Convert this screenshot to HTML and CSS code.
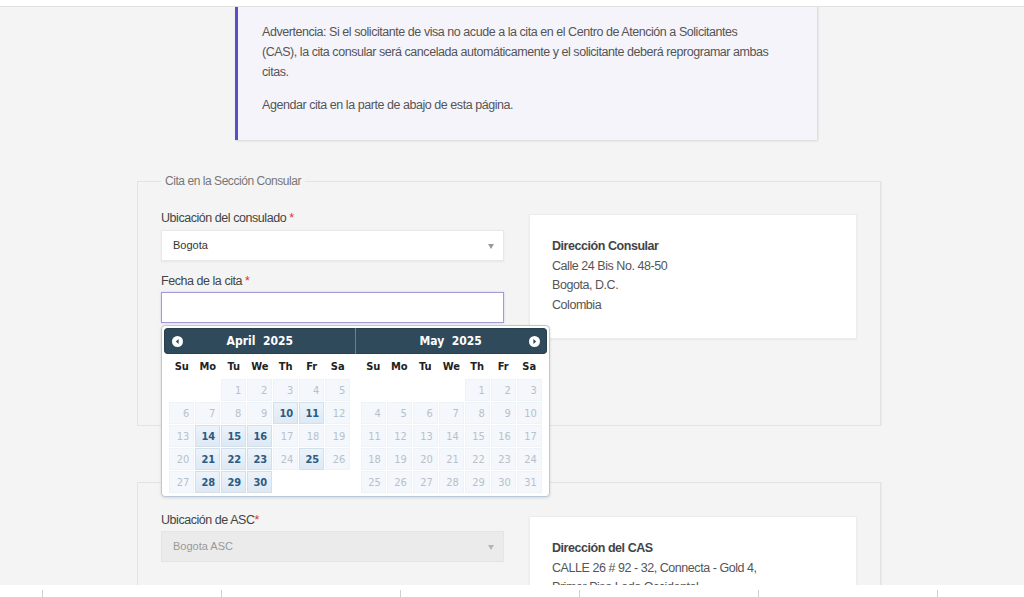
FILE: index.html
```html
<!DOCTYPE html>
<html lang="es">
<head>
  <meta charset="UTF-8">
  <title>Programar cita</title>
  <link rel="stylesheet" href="styles.css">
</head>
<body>
  <header class="topbar"></header>

  <main class="page">
    <div class="warning">
      <p>Advertencia: Si el solicitante de visa no acude a la cita en el Centro de Atención a Solicitantes (CAS), la cita consular será cancelada automáticamente y el solicitante deberá reprogramar ambas citas.</p>
      <p>Agendar cita en la parte de abajo de esta página.</p>
    </div>

    <!-- Consular section -->
    <fieldset class="section">
      <legend>Cita en la Sección Consular</legend>
      <div class="section-grid">
        <div class="fields">
          <label>Ubicación del consulado <span class="req">*</span></label>
          <div class="select">Bogota</div>
          <label class="next-label">Fecha de la cita <span class="req">*</span></label>
          <div class="date-wrap">
            <div class="date-input"></div>

            <div class="datepicker">
              <div class="dp-group">
                <div class="dp-header dp-first">
                  <span class="dp-nav dp-prev">
                    <svg width="11" height="11" viewBox="0 0 11 11"><circle cx="5.5" cy="5.5" r="5.5" fill="#fff"/><path d="M6.6 3.1 L3.8 5.5 L6.6 7.9 Z" fill="#2f4a5b"/></svg>
                  </span>
                  <span class="dp-title">April&nbsp; 2025</span>
                </div>
                <table class="dp-cal">
                  <thead>
                    <tr><th>Su</th><th>Mo</th><th>Tu</th><th>We</th><th>Th</th><th>Fr</th><th>Sa</th></tr>
                  </thead>
                  <tbody>
                    <tr><td></td><td></td><td class="day off">1</td><td class="day off">2</td><td class="day off">3</td><td class="day off">4</td><td class="day off">5</td></tr>
                    <tr><td class="day off">6</td><td class="day off">7</td><td class="day off">8</td><td class="day off">9</td><td class="day">10</td><td class="day">11</td><td class="day off">12</td></tr>
                    <tr><td class="day off">13</td><td class="day">14</td><td class="day">15</td><td class="day">16</td><td class="day off">17</td><td class="day off">18</td><td class="day off">19</td></tr>
                    <tr><td class="day off">20</td><td class="day">21</td><td class="day">22</td><td class="day">23</td><td class="day off">24</td><td class="day">25</td><td class="day off">26</td></tr>
                    <tr><td class="day off">27</td><td class="day">28</td><td class="day">29</td><td class="day">30</td><td></td><td></td><td></td></tr>
                  </tbody>
                </table>
              </div>
              <div class="dp-group">
                <div class="dp-header dp-last">
                  <span class="dp-title">May&nbsp; 2025</span>
                  <span class="dp-nav dp-next">
                    <svg width="11" height="11" viewBox="0 0 11 11"><circle cx="5.5" cy="5.5" r="5.5" fill="#fff"/><path d="M4.4 3.1 L7.2 5.5 L4.4 7.9 Z" fill="#2f4a5b"/></svg>
                  </span>
                </div>
                <table class="dp-cal">
                  <thead>
                    <tr><th>Su</th><th>Mo</th><th>Tu</th><th>We</th><th>Th</th><th>Fr</th><th>Sa</th></tr>
                  </thead>
                  <tbody>
                    <tr><td></td><td></td><td></td><td></td><td class="day off">1</td><td class="day off">2</td><td class="day off">3</td></tr>
                    <tr><td class="day off">4</td><td class="day off">5</td><td class="day off">6</td><td class="day off">7</td><td class="day off">8</td><td class="day off">9</td><td class="day off">10</td></tr>
                    <tr><td class="day off">11</td><td class="day off">12</td><td class="day off">13</td><td class="day off">14</td><td class="day off">15</td><td class="day off">16</td><td class="day off">17</td></tr>
                    <tr><td class="day off">18</td><td class="day off">19</td><td class="day off">20</td><td class="day off">21</td><td class="day off">22</td><td class="day off">23</td><td class="day off">24</td></tr>
                    <tr><td class="day off">25</td><td class="day off">26</td><td class="day off">27</td><td class="day off">28</td><td class="day off">29</td><td class="day off">30</td><td class="day off">31</td></tr>
                  </tbody>
                </table>
              </div>
            </div>
          </div>
        </div>

        <div class="address-card">
          <div class="address-title">Dirección Consular</div>
          <div>Calle 24 Bis No. 48-50</div>
          <div>Bogota, D.C.</div>
          <div>Colombia</div>
        </div>
      </div>
    </fieldset>

    <!-- CAS section -->
    <fieldset class="section no-legend">
      <div class="section-grid">
        <div class="fields">
          <label>Ubicación de ASC<span class="req">*</span></label>
          <div class="select disabled">Bogota ASC</div>
        </div>
        <div class="address-card">
          <div class="address-title">Dirección del CAS</div>
          <div>CALLE 26 # 92 - 32, Connecta - Gold 4,</div>
          <div>Primer Piso Lado Occidental</div>
          <div>Bogota, D.C.</div>
          <div>Colombia</div>
        </div>
      </div>
    </fieldset>
  </main>

  <footer class="bottombar">
    <span></span><span></span><span></span><span></span><span></span><span></span>
  </footer>
</body>
</html>
```

FILE: styles.css
```css
body {margin:0; background:#f4f4f4; font-family:"Liberation Sans", Arial, sans-serif; font-size:12.5px; letter-spacing:-0.45px; color:#444;}
.topbar {position:fixed; top:0; left:0; right:0; height:6px; background:#fff; border-bottom:1px solid #e2e2e2; z-index:10;}
.bottombar {position:fixed; bottom:0; left:0; right:0; height:12px; background:#fff; display:flex; padding-left:42px; overflow:hidden; z-index:10;}
.bottombar span {flex:0 0 178px; border-left:1px solid #cfcfcf; margin-top:5px;}

.page {width:744px; margin-left:137px; padding-bottom:60px;}

/* Warning box */
.warning {margin-left:98px; width:582px; box-sizing:border-box; background:#f5f4fb; border-left:3px solid #5b4fc9; padding:22px 45px 25px 24px; line-height:20px; color:#555; box-shadow:1px 1px 2px rgba(0,0,0,.12);}
.warning p {margin:0;}
.warning p + p {margin-top:13px;}

/* Sections */
.section {margin:33px 0 0; border:1px solid #e3e3e3; padding:21px 23px 86px; min-width:0; box-shadow:1px 0 0 #ebebeb;}
.section legend {padding:0 4px; font-size:12px; line-height:16px; color:#777;}
.section.no-legend {margin-top:56px; padding-top:29px;}
.section-grid {display:grid; grid-template-columns:343px 328px; column-gap:25px; align-items:start;}

label {display:block; line-height:16px; margin-bottom:4px; color:#444;}
.req {color:#d33;}
.next-label {margin-top:12px;}
.next-label + .date-wrap {margin-top:-1px;}

.select {position:relative; height:31px; box-sizing:border-box; background:#fff; border:1px solid #e8e8e8; box-shadow:0 1px 2px rgba(0,0,0,.06); padding-left:11px; line-height:29px; font-size:11px; letter-spacing:0; color:#333;}
.select::after {content:""; position:absolute; right:9px; top:13px; border-left:3px solid transparent; border-right:3px solid transparent; border-top:5px solid #9a9a9a;}
.select.disabled {margin-top:-1px; background:#ebebeb; border-color:#e4e4e4; box-shadow:none; color:#999;}
.select.disabled::after {border-top-color:#b5b5b5;}

.date-wrap {position:relative;}
.date-input {height:31px; box-sizing:border-box; background:#fff; border:1px solid #a29cd4; box-shadow:0 0 2px rgba(91,79,201,.25);}

/* Address card */
.address-card {margin-top:4px; background:#fff; border:1px solid #ececec; box-shadow:0 1px 2px rgba(0,0,0,.05); padding:22px 23px 23px 22px; line-height:19.5px; color:#555;}
.address-title {font-weight:bold; color:#444;}

/* Datepicker popup */
.datepicker {position:absolute; top:calc(100% + 2px); left:0; z-index:5; width:383px; display:flex; padding:2px; background:#fff; border:1px solid #b7c9d8; border-radius:4px; box-shadow:0 1px 3px rgba(0,0,0,.12); font-family:"DejaVu Sans Condensed", "DejaVu Sans", sans-serif; letter-spacing:0;}
.dp-group {flex:1;}
.dp-header {position:relative; height:26px; box-sizing:border-box; display:flex; align-items:center; justify-content:center; background:#2f4a5b; color:#fff; font-weight:bold; font-size:12px; border:1px solid #283f4e;}
.dp-first {border-radius:4px 0 0 4px; border-right:1px solid #6b8192;}
.dp-last {border-radius:0 4px 4px 0; border-left:none;}
.dp-nav {position:absolute; top:7px; width:11px; height:11px; display:flex;}
.dp-prev {left:7px;}
.dp-next {right:6px;}
.dp-cal {margin:0 auto; border-collapse:separate; border-spacing:1px; font-size:11px;}
.dp-cal th {height:23px; padding:0; font-weight:bold; color:#222; text-align:center;}
.dp-cal td {width:25px; height:22px; padding:0 4px 0 0; box-sizing:border-box; text-align:right;}
.day {background:linear-gradient(#ecf3fa, #dde9f5); border:1px solid #d2e0ec; color:#2d5a82; font-weight:bold;}
.day.off {background:#f4f7fb; border-color:#eef3f8; color:#b8c1ca; font-weight:normal;}
```
